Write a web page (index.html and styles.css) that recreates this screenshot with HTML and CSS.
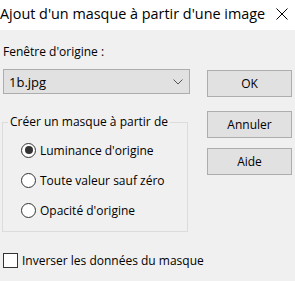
FILE: index.html
```html
<!DOCTYPE html>
<html lang="fr">
<head>
<meta charset="utf-8">
<link rel="stylesheet" href="styles.css">
</head>
<body>
<div class="dialog">
  <div class="titlebar">
    <span class="title">Ajout d'un masque à partir d'une image</span>
    <svg class="close" width="12" height="12" viewBox="0 0 12 12"><path d="M0.5 0.5 L11.5 11.5 M11.5 0.5 L0.5 11.5" stroke="#000" stroke-width="1" fill="none"/></svg>
  </div>
  <div class="main">
    <div class="left">
      <div class="label">Fenêtre d'origine :</div>
      <div class="combo">
        <span>1b.jpg</span>
        <svg class="chev" width="10" height="6" viewBox="0 0 10 6"><path d="M0.5 0.5 L5 5 L9.5 0.5" stroke="#555" stroke-width="1" fill="none"/></svg>
      </div>
      <fieldset class="group">
        <legend>Créer un masque à partir de</legend>
        <div class="radio"><span class="dot on"></span><span>Luminance d'origine</span></div>
        <div class="radio"><span class="dot"></span><span>Toute valeur sauf zéro</span></div>
        <div class="radio"><span class="dot"></span><span>Opacité d'origine</span></div>
      </fieldset>
      <div class="check"><span class="box"></span><span>Inverser les données du masque</span></div>
    </div>
    <div class="right">
      <div class="btn ok">OK</div>
      <div class="btn cancel">Annuler</div>
      <div class="btn help">Aide</div>
    </div>
  </div>
</div>
</body>
</html>
```
FILE: styles.css
```css
html, body { margin: 0; padding: 0; }
body {
  width: 295px; height: 281px; overflow: hidden;
  background: #f0f0f0;
  font-family: "Open Sans", "Noto Sans", sans-serif;
  font-size: 12px; color: #000;
}
.dialog { width: 295px; height: 281px; display: flex; flex-direction: column; }
.titlebar {
  height: 30px; background: #fff; display: flex; align-items: center;
  justify-content: space-between; padding: 0 7px 0 0; box-sizing: border-box;
}
.title { font-size: 14.4px; line-height: 20px; margin-top: -2px; white-space: nowrap; }
.close { margin-top: -2px; }
.main { display: flex; padding-left: 2px; }
.left { width: 188px; display: flex; flex-direction: column; white-space: nowrap; }
.label { margin-top: 14px; margin-left: 1px; line-height: 16px; height: 16px; }
.combo {
  margin-top: 9px; margin-left: 1px; height: 25px; box-sizing: border-box;
  border: 1px solid #adadad; background: #e1e1e1;
  display: flex; align-items: center; justify-content: space-between;
  padding: 0 6px 0 5px; font-size: 13px;
}
.chev { margin-top: 1px; }
.group {
  margin: 20px 0 0 0; padding: 10px 0 11px 5px; width: 186px; box-sizing: border-box;
  border: 1px solid #dcdcdc; min-width: 0;
}
.group legend { padding: 0 2px; margin: 0; line-height: 16px; white-space: nowrap; }
.radio { display: flex; align-items: center; height: 20px; gap: 4px; margin-left: 13px; }
.radio + .radio { margin-top: 10px; }
.dot {
  width: 15px; height: 15px; border: 1px solid #333; border-radius: 50%;
  background: #fff; box-sizing: border-box; position: relative; flex: none;
}
.dot.on::after {
  content: ""; position: absolute; left: 2.5px; top: 2.5px; width: 8px; height: 8px;
  border-radius: 50%; background: #333;
}
.check { display: flex; align-items: center; height: 16px; margin-top: 20px; margin-left: 1px; gap: 4px; }
.box { width: 15px; height: 15px; border: 1px solid #333; background: #fff; box-sizing: border-box; flex: none; }
.right { margin-left: 17px; display: flex; flex-direction: column; }
.btn {
  width: 85px; height: 27px; box-sizing: border-box; border: 1px solid #adadad;
  background: #e1e1e1; display: flex; align-items: center; justify-content: center;
}
.ok { margin-top: 40px; }
.cancel { margin-top: 14px; }
.help { margin-top: 10px; }
```
